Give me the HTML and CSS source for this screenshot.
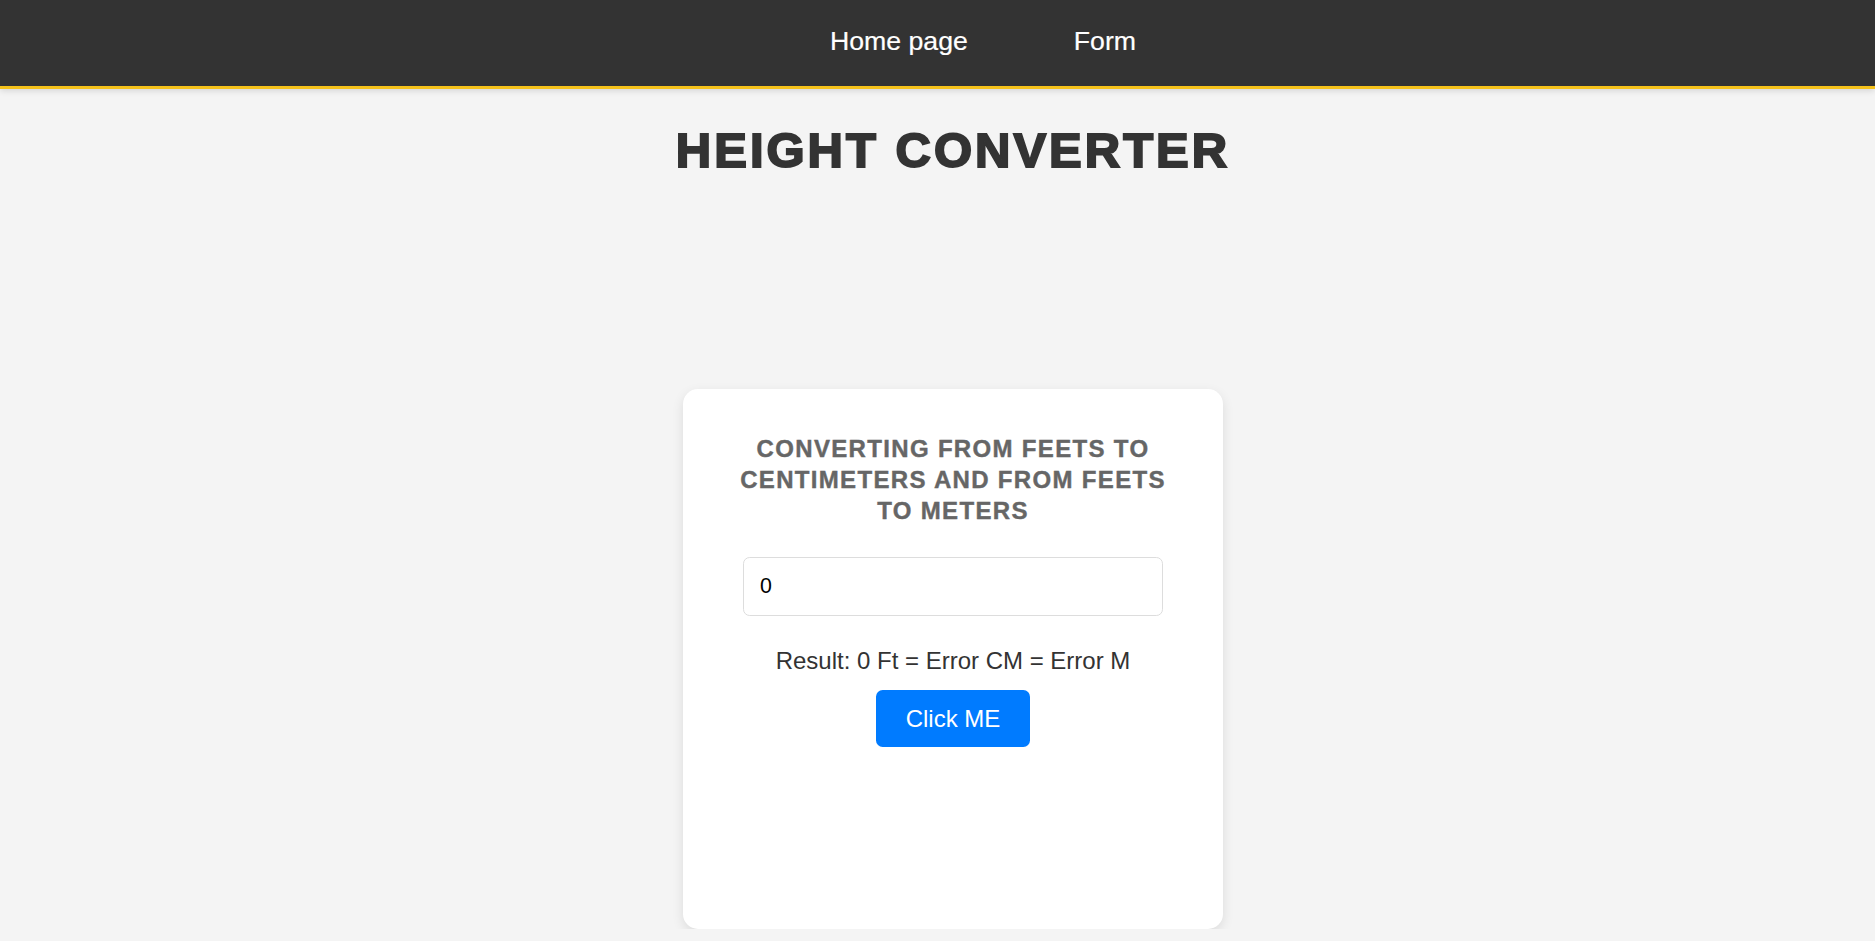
FILE: index.html
```html
<!DOCTYPE html>
<html lang="en">
<head>
<meta charset="utf-8">
<title>Height Converter</title>
<link rel="stylesheet" href="styles.css">
</head>
<body>
<header class="topbar">
  <nav>
    <ul class="nav-list">
      <li><a class="nav-link" href="#">Home page</a></li>
      <li><a class="nav-link" href="#">Form</a></li>
    </ul>
  </nav>
</header>
<main class="page">
  <h1 class="title">HEIGHT CONVERTER</h1>
  <section class="card">
    <h2 class="card-title">CONVERTING FROM FEETS TO CENTIMETERS AND FROM FEETS TO METERS</h2>
    <input class="feet-input" type="text" value="0">
    <p class="result">Result: 0 Ft = Error CM = Error M</p>
    <button class="convert-btn" type="button">Click ME</button>
  </section>
</main>
</body>
</html>
```
FILE: styles.css
```css
html, body {
  margin: 0;
  padding: 0;
}

body {
  background: #f4f4f4;
  font-family: "Liberation Sans", Arial, sans-serif;
  color: #333;
}

.topbar {
  background: #333;
  height: 86px;
  border-bottom: 3px solid #f5c21b;
  box-shadow: 0 2px 6px rgba(0, 0, 0, 0.12);
}

.nav-list {
  display: flex;
  justify-content: center;
  align-items: center;
  gap: 106px;
  height: 86px;
  margin: 0;
  padding: 0 0 4px 91px;
  box-sizing: border-box;
  list-style: none;
}

.nav-link {
  color: #fff;
  text-decoration: none;
  font-size: 26.67px;
  -webkit-text-stroke: 0.2px #fff;
}

.page {
  display: flex;
  flex-direction: column;
  align-items: center;
  padding-left: 31px;
}

.title {
  margin: 33px 0 0;
  font-size: 49px;
  font-weight: bold;
  letter-spacing: 3px;
  color: #333;
  line-height: normal;
  -webkit-text-stroke: 2px #333;
}

.card {
  margin-top: 211px;
  width: 540px;
  height: 540px;
  box-sizing: border-box;
  padding: 0 53.33px;
  background: #fff;
  border-radius: 15px;
  box-shadow: 0 4px 12px rgba(0, 0, 0, 0.1);
  display: flex;
  flex-direction: column;
  align-items: center;
}

.card-title {
  margin: 43.7px 0 0;
  font-size: 24px;
  line-height: 31px;
  letter-spacing: 1.33px;
  font-weight: bold;
  color: #666;
  text-align: center;
  -webkit-text-stroke: 0.4px #666;
}

.feet-input {
  margin-top: 31.7px;
  width: 420px;
  height: 59px;
  box-sizing: border-box;
  border: 1px solid #ddd;
  border-radius: 6.67px;
  padding: 0 16px;
  font-family: inherit;
  font-size: 21.33px;
  color: #000;
  background: #fff;
  outline: none;
}

.result {
  margin: 31px 0 0;
  font-size: 24px;
  line-height: normal;
  color: #333;
}

.convert-btn {
  margin-top: 14.5px;
  background: #007bff;
  color: #fff;
  border: none;
  border-radius: 6.67px;
  font-family: inherit;
  font-size: 24px;
  line-height: normal;
  padding: 14.7px 29.7px;
  cursor: pointer;
}
```
